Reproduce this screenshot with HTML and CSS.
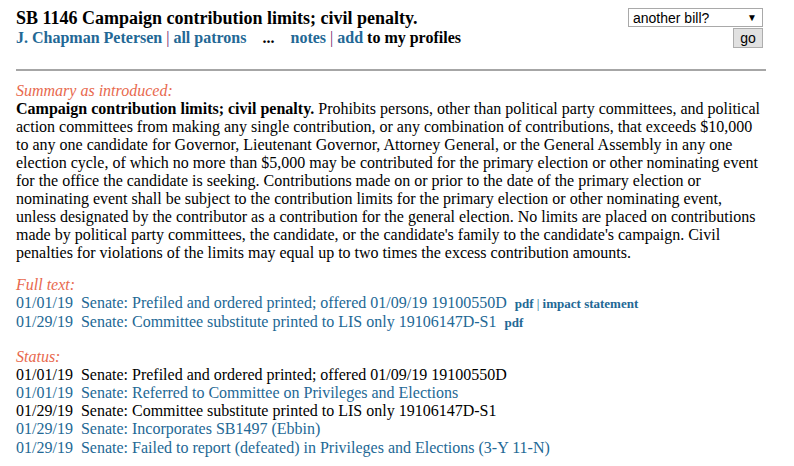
FILE: index.html
```html
<!DOCTYPE html>
<html>
<head>
<meta charset="utf-8">
<link rel="stylesheet" href="styles.css">
</head>
<body>
<div class="page">
  <div class="header">
    <div class="titles">
      <div class="title">SB 1146 Campaign contribution limits; civil penalty.</div>
      <div class="patrons"><a href="#">J. Chapman Petersen</a> <span class="sep">|</span> <a href="#">all patrons</a>&nbsp;&nbsp;&nbsp; ... &nbsp;&nbsp;&nbsp;<a href="#">notes</a> <span class="sep">|</span> <a href="#">add</a> to my profiles</div>
    </div>
    <form class="picker">
      <div class="select"><span>another bill?</span><span class="arrow">▼</span></div>
      <button type="button" class="go">go</button>
    </form>
  </div>
  <hr class="rule">
  <div class="section first">
    <div class="label">Summary as introduced:</div>
    <p class="summary"><b>Campaign contribution limits; civil penalty.</b> Prohibits persons, other than political party committees, and political action committees from making any single contribution, or any combination of contributions, that exceeds $10,000 to any one candidate for Governor, Lieutenant Governor, Attorney General, or the General Assembly in any one election cycle, of which no more than $5,000 may be contributed for the primary election or other nominating event for the office the candidate is seeking. Contributions made on or prior to the date of the primary election or nominating event shall be subject to the contribution limits for the primary election or other nominating event, unless designated by the contributor as a contribution for the general election. No limits are placed on contributions made by political party committees, the candidate, or the candidate's family to the candidate's campaign. Civil penalties for violations of the limits may equal up to two times the excess contribution amounts.</p>
  </div>
  <div class="section">
    <div class="label">Full text:</div>
    <ul class="list">
      <li><a href="#">01/01/19&nbsp; Senate: Prefiled and ordered printed; offered 01/09/19 19100550D</a>&nbsp; <a class="small" href="#">pdf</a><span class="smallsep"> | </span><a class="small" href="#">impact statement</a></li>
      <li><a href="#">01/29/19&nbsp; Senate: Committee substitute printed to LIS only 19106147D-S1</a>&nbsp; <a class="small" href="#">pdf</a></li>
    </ul>
  </div>
  <div class="section">
    <div class="label">Status:</div>
    <ul class="list">
      <li>01/01/19&nbsp; Senate: Prefiled and ordered printed; offered 01/09/19 19100550D</li>
      <li><a href="#">01/01/19&nbsp; Senate: Referred to Committee on Privileges and Elections</a></li>
      <li>01/29/19&nbsp; Senate: Committee substitute printed to LIS only 19106147D-S1</li>
      <li><a href="#">01/29/19&nbsp; Senate: Incorporates SB1497 (Ebbin)</a></li>
      <li><a href="#">01/29/19&nbsp; Senate: Failed to report (defeated) in Privileges and Elections (3-Y 11-N)</a></li>
    </ul>
  </div>
  <hr class="rule bottom">
</div>
</body>
</html>
```
FILE: styles.css
```css
html, body {
  margin: 0;
  padding: 0;
  background: #ffffff;
}
body {
  font-family: "Liberation Serif", "Times New Roman", serif;
  font-size: 16px;
  color: #000000;
}
a {
  color: #236895;
  text-decoration: none;
}
.page {
  width: 750px;
  padding: 8px 0 0 16px;
}
.header {
  display: flex;
  justify-content: space-between;
  align-items: flex-start;
}
.titles {
  padding-top: 1px;
}
.title {
  font-weight: bold;
  font-size: 18px;
  line-height: 19px;
}
.patrons {
  font-weight: bold;
  font-size: 16px;
  line-height: 19px;
}
.sep {
  color: #6a1b6a;
  font-weight: normal;
}
.picker {
  display: flex;
  flex-direction: column;
  align-items: flex-end;
  margin: 0 3px 0 0;
  gap: 1px;
}
.select {
  width: 124px;
  height: 17px;
  border: 1px solid #a9a9a9;
  display: flex;
  justify-content: space-between;
  align-items: center;
  padding: 0 5px 0 4px;
  box-sizing: content-box;
  font-family: "Liberation Sans", Arial, sans-serif;
  font-size: 14px;
  background: #fff;
}
.arrow {
  font-size: 10px;
}
.go {
  width: 30px;
  height: 20px;
  padding: 0;
  border: 1px solid #adadad;
  background: #e1e1e1;
  font-family: "Liberation Sans", Arial, sans-serif;
  font-size: 14px;
  color: #000;
}
.rule {
  border: 0;
  border-top: 2px solid #a6a6a6;
  margin: 21px 0 11px 0;
  height: 0;
}
.rule.bottom {
  margin: 6px 0 0 0;
}
.section {
  margin-bottom: 15px;
}
.section.first {
  margin-bottom: 14px;
}
.label {
  font-style: italic;
  color: #e8694e;
  line-height: 18px;
}
.summary {
  margin: 0;
  line-height: 18px;
}
.list {
  list-style: none;
  margin: 0;
  padding: 0;
}
.list li {
  line-height: 18.25px;
}
.small {
  font-size: 13px;
  font-weight: bold;
}
.smallsep {
  font-size: 13px;
  color: #236895;
}
```
